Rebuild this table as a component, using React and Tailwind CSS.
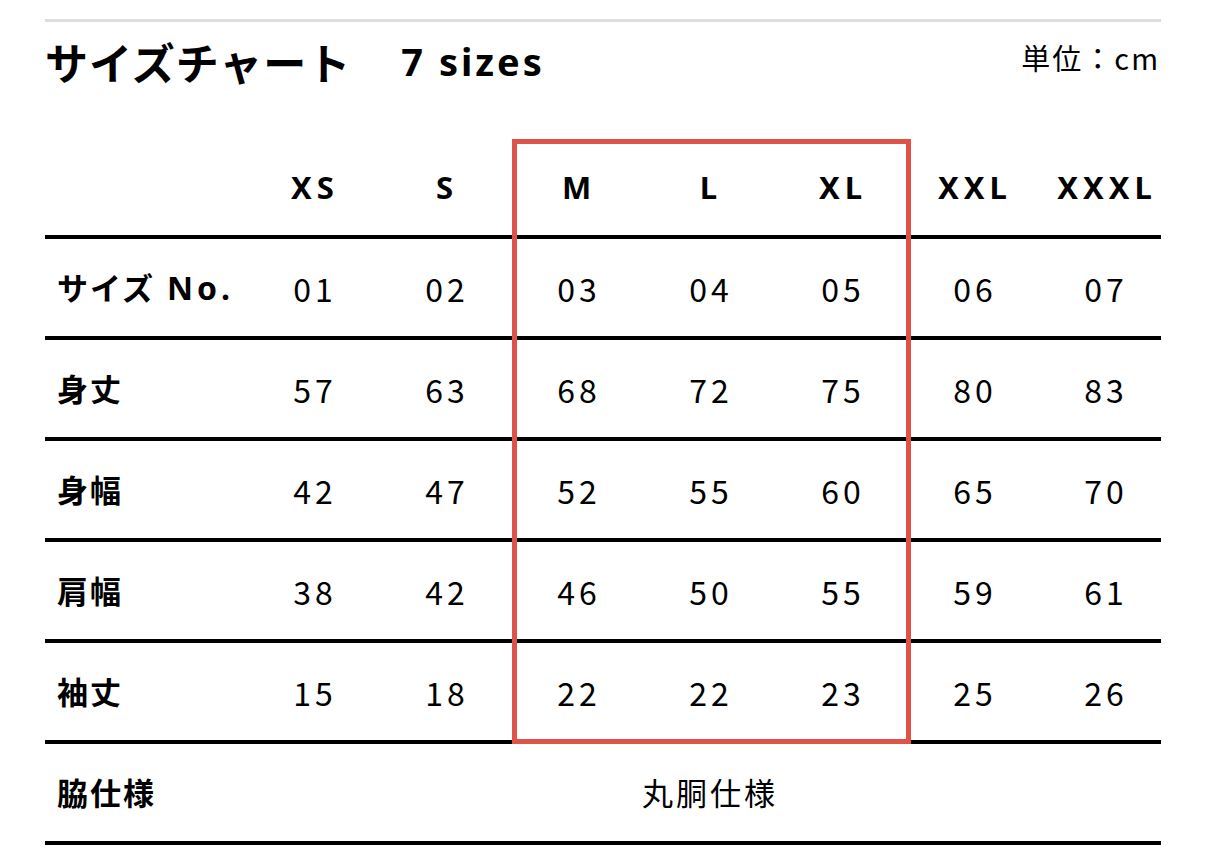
import React from "react";

const sizes = ["XS", "S", "M", "L", "XL", "XXL", "XXXL"];
const rows = [
  { label: "サイズ", extra: "No.", values: ["01", "02", "03", "04", "05", "06", "07"] },
  { label: "身丈", values: ["57", "63", "68", "72", "75", "80", "83"] },
  { label: "身幅", values: ["42", "47", "52", "55", "60", "65", "70"] },
  { label: "肩幅", values: ["38", "42", "46", "50", "55", "59", "61"] },
  { label: "袖丈", values: ["15", "18", "22", "22", "23", "25", "26"] },
];

const font = { fontFamily: '"Noto Sans CJK JP", "Noto Sans", sans-serif' };
const latin = { fontFamily: '"Noto Sans", "Noto Sans CJK JP", sans-serif' };
const cols = "grid grid-cols-[202px_132px_132px_132px_132px_132px_132px_122px]";

export default function App() {
  return (
    <div className="w-[1206px] h-[859px] bg-white text-black overflow-hidden" style={font}>
      <div className="ml-[45px] w-[1116px] pt-[19px]">
        <div className="h-[3px] bg-[#dddddd]" />
        <div className="flex items-center justify-between h-[80px] -mt-[1px]">
          <div className="flex items-center">
            <span className="text-[43px] font-bold leading-none tracking-[1px]">サイズチャート</span>
            <span className="ml-[50px] text-[38px] font-bold leading-none tracking-[3px]" style={latin}>
              7 sizes
            </span>
          </div>
          <span className="text-[29px] leading-none tracking-[2px] mr-[1px] -mt-[8px]">単位：cm</span>
        </div>
        <div className="relative mt-[38px]">
          <div className={`${cols} h-[100px] border-b-4 border-black items-center`}>
            <div />
            {sizes.map((s, i) => (
              <div
                key={s}
                className={`text-center text-[31px] font-bold tracking-[5px] ${i === 6 ? "pl-[14px]" : "pl-[4px]"}`}
                style={latin}
              >
                {s}
              </div>
            ))}
          </div>
          {rows.map((r) => (
            <div key={r.label} className={`${cols} h-[101px] border-b-4 border-black items-center`}>
              <div className="pl-[12px] text-[31px] font-bold tracking-[2px] whitespace-nowrap">
                {r.label}
                {r.extra && (
                  <span className="ml-[12px] text-[32px] tracking-[4px]" style={latin}>
                    {r.extra}
                  </span>
                )}
              </div>
              {r.values.map((v, i) => (
                <div
                  key={i}
                  className={`text-center text-[32px] tracking-[4px] ${i === 6 ? "pl-[12px]" : "pl-[4px]"}`}
                >
                  {v}
                </div>
              ))}
            </div>
          ))}
          <div className={`${cols} h-[101px] border-b-4 border-black items-center`}>
            <div className="pl-[12px] text-[31px] font-bold tracking-[2px]">脇仕様</div>
            <div className="col-span-7 text-center text-[31px] tracking-[3px] pl-[12px]">丸胴仕様</div>
          </div>
          <div className="absolute left-[467px] top-0 w-[399px] h-[605px] border-[5px] border-[#df5247] pointer-events-none" />
        </div>
      </div>
    </div>
  );
}
